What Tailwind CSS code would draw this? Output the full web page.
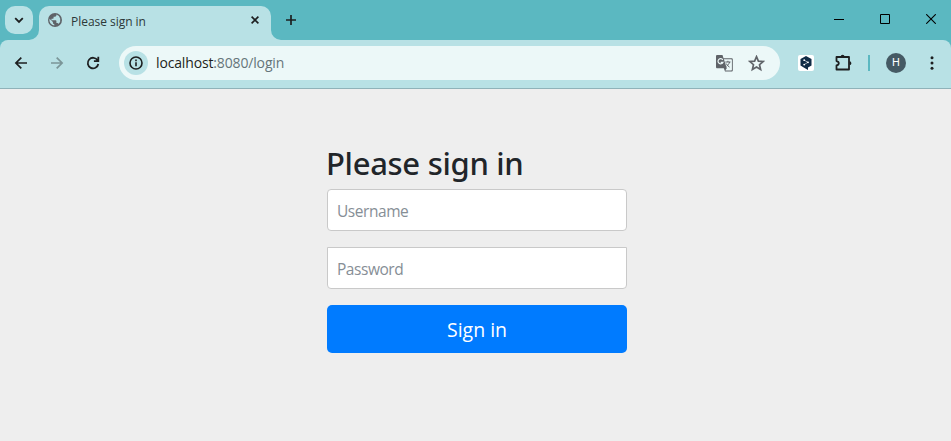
<!DOCTYPE html>
<html lang="en">
<head>
<meta charset="utf-8">
<title>Please sign in</title>
<script src="https://cdn.jsdelivr.net/npm/@tailwindcss/browser@4"></script>
</head>
<body class="h-[441px] w-[951px] overflow-hidden bg-[#eeeeee] font-['Open_Sans','Noto_Sans',sans-serif] text-[#212529]">
<header class="bg-[#5bb8c1]">
  <div class="flex h-10 pl-[5px] pt-[6px]">
    <button class="flex h-7 w-7 items-center justify-center rounded-[10px] bg-[#b8e1e5]" aria-label="Search tabs">
      <svg width="10" height="7" viewBox="0 0 10 7" fill="none" stroke="#1d1f20" stroke-width="1.8"><path d="M1.2 1.2 5 5l3.8-3.8"/></svg>
    </button>
    <div class="relative ml-[6px] flex h-[34px] w-[232px] items-start rounded-t-[10px] bg-[#b8e1e5] pl-[9px]">
      <svg class="absolute -left-[10px] bottom-0" width="10" height="10" viewBox="0 0 10 10"><path d="M10 0v10H0A10 10 0 0 0 10 0Z" fill="#b8e1e5"/></svg>
      <svg class="absolute -right-[10px] bottom-0" width="10" height="10" viewBox="0 0 10 10"><path d="M0 0v10h10A10 10 0 0 1 0 0Z" fill="#b8e1e5"/></svg>
      <svg class="mt-[7px]" width="14" height="14" viewBox="0 0 14 14"><circle cx="7" cy="7" r="7" fill="#5f6368"/><path d="M8.4 1.500v.8c0 .8-.6 1.400-1.400 1.400H5.600v1.400c0 .4-.3.700-.7.700H3.500v1.500h4.200c.4 0 .7.300.7.700v2.100h.7c.6 0 1.200.4 1.300 1a5.600 5.600 0 0 0-2-9.600ZM6.300 12.600v-1.400c-.8 0-1.400-.6-1.400-1.400v-.7L1.500 5.800a5.600 5.600 0 0 0 4.800 6.800Z" fill="#b8e1e5"/></svg>
      <span class="ml-[9px] mt-[8px] w-[170px] whitespace-nowrap text-[12px] leading-4 tracking-[-0.03px] text-[#2c3839]">Please sign in</span>
      <svg class="ml-[10px] mt-[10px]" width="8" height="8" viewBox="0 0 8 8" stroke="#1d1f20" stroke-width="1.6"><path d="m.6.6 6.800 6.800m0-6.800L.6 7.400"/></svg>
    </div>
    <svg class="ml-[15px] mt-[9px]" width="10" height="10" viewBox="0 0 10 10" stroke="#1d1f20" stroke-width="1.7"><path d="M5 0v10M0 5h10"/></svg>
    <div class="ml-auto mr-[15px] mt-[8px] flex gap-9">
      <svg width="10" height="10" viewBox="0 0 10 10" stroke="#000"><path d="M0 5.500h10"/></svg>
      <svg width="10" height="10" viewBox="0 0 10 10" fill="none" stroke="#000"><path d="M.5.500h9v9h-9z"/></svg>
      <svg width="10" height="10" viewBox="0 0 10 10" stroke="#000" stroke-width="1.1"><path d="m.2.2 9.600 9.600m0-9.600L.2 9.800"/></svg>
    </div>
  </div>
  <div class="flex h-[49px] items-center rounded-t-[8px] border-b border-[#8fb2b9] bg-[#b8e1e5] pb-[2px] pl-[13px]">
    <svg width="16" height="16" viewBox="0 0 16 16" fill="none" stroke="#1d1f20" stroke-width="1.7"><path d="M14 8H3m5.300-5.400L2.900 8l5.400 5.400"/></svg>
    <svg class="ml-5" width="16" height="16" viewBox="0 0 16 16" fill="none" stroke="#7b9598" stroke-width="1.7"><path d="M2 8h11M7.700 2.600 13.100 8l-5.400 5.400"/></svg>
    <svg class="ml-5" width="16" height="16" viewBox="0 0 16 16" fill="none" stroke="#1d1f20" stroke-width="1.8"><path d="M12.600 5.300A5.300 5.300 0 1 0 13.300 9M13.300 1.800v4.400H8.900"/></svg>
    <div class="ml-[18px] flex h-[34px] w-[661px] items-center rounded-full bg-[#ecf8f8] pl-[5px] pr-[15px]">
      <div class="flex h-6 w-6 items-center justify-center rounded-full bg-[#b8e1e5]">
        <svg width="14" height="14" viewBox="0 0 14 14" fill="none" stroke="#1d1f20" stroke-width="1.6"><circle cx="7" cy="7" r="6"/><path d="M7 6.200v4M7 3.600v1.600"/></svg>
      </div>
      <span class="ml-[8px] whitespace-nowrap text-[14px] leading-5 tracking-[-0.15px] text-[#1d1f20]">localhost<span class="text-[#66757a]">:8080/login</span></span>
      <svg class="ml-auto" width="17" height="17" viewBox="0 0 17 17"><path d="M1.300 0h5.200l1 3.200H15.500c.8 0 1.300.5 1.300 1.300v10.700c0 .8-.5 1.300-1.300 1.300H9l-1.200-3.300H1.300C.5 13.200 0 12.700 0 11.900V1.300C0 .5.500 0 1.300 0Z" fill="#5f6368"/><path d="M7.900 4.200h7.300c.4 0 .7.300.7.700v9.900c0 .4-.3.700-.7.700H9.300l1.500-2.300Z" fill="#ecf8f8"/><path d="M6.800 4.800A2.600 2.600 0 1 0 7 7.300H4.700" fill="none" stroke="#ecf8f8" stroke-width="1.200"/><path d="M9.300 7h5.200m-2.600-1.200V7m1.700 0c-.5 1.900-1.700 3.300-3 4.200m-.4-2.700c.8 1.600 1.900 2.700 3.300 3.600" fill="none" stroke="#5f6368" stroke-width="1"/></svg>
      <svg class="ml-[15px]" width="17" height="17" viewBox="0 0 17 17" fill="none" stroke="#5f6368" stroke-width="1.700"><path d="m8.500 1.700 1.900 4.400 4.800.4-3.700 3.200 1.100 4.700-4.100-2.500-4.100 2.500 1.100-4.700-3.700-3.200 4.800-.4Z"/></svg>
    </div>
    <div class="ml-[18px] flex h-4 w-4 items-center justify-center rounded-[2px] bg-white">
      <svg width="12" height="14" viewBox="0 0 12 14"><path d="m6 0 5.500 3.100v6.400L8 11.600V14l-3-1.700L.5 9.500V3.100Z" fill="#0f2b46"/><path d="m4.300 4.200 3.600 2.100-3.600 2.300" fill="none" stroke="#fff" stroke-width=".6"/><g fill="#fff"><circle cx="4.200" cy="4.200" r=".9"/><circle cx="8" cy="6.300" r=".9"/><circle cx="4.200" cy="8.600" r=".9"/></g></svg>
    </div>
    <svg class="ml-5" width="18" height="18" viewBox="0 0 18 18"><path d="M2.500 3h12.500v12.500h-12.500v-4c1.500-.3 2.300-.9 2.300-2.200s-.8-1.900-2.300-2.200Z" fill="none" stroke="#1d1f20" stroke-width="1.800" stroke-linejoin="round"/><path d="M6.700 2.600a1.900 1.900 0 0 1 3.800 0ZM15.500 7.300a1.900 1.900 0 0 1 0 3.800Z" fill="#1d1f20"/></svg>
    <div class="ml-4 h-4 w-[2px] bg-[#5bb8c1]"></div>
    <div class="ml-4 flex h-5 w-5 items-center justify-center rounded-full bg-[#455a64] font-[Roboto,sans-serif] text-[11px] font-normal leading-5 text-white">H</div>
    <svg class="ml-[24px]" width="4" height="14" viewBox="0 0 4 14" fill="#1d1f20"><circle cx="2" cy="1.800" r="1.500"/><circle cx="2" cy="7" r="1.500"/><circle cx="2" cy="12.200" r="1.500"/></svg>
  </div>
</header>
<main class="pl-[327px] pt-[55px]">
  <form class="flex w-[300px] flex-col">
    <h2 class="-ml-px mb-[7px] whitespace-nowrap font-['Noto_Sans','Open_Sans',sans-serif] text-[31px] font-medium leading-[38px] tracking-[-0.3px]">Please sign in</h2>
    <input class="mb-4 h-[42px] rounded-[4px] border border-[#c9c9c9] bg-white pl-[9px] pr-[10px] pt-px text-[15.5px] tracking-[-0.45px] placeholder:text-[#868e96]" type="text" placeholder="Username">
    <input class="mb-4 h-[42px] rounded-b-[4px] border border-[#c9c9c9] bg-white pl-[9px] pr-[10px] pt-px text-[15.5px] tracking-[-0.45px] placeholder:text-[#868e96]" type="password" placeholder="Password">
    <button class="h-12 rounded-[5px] bg-[#007bff] pt-[2px] text-[19.5px] text-white" type="button">Sign in</button>
  </form>
</main>
</body>
</html>
